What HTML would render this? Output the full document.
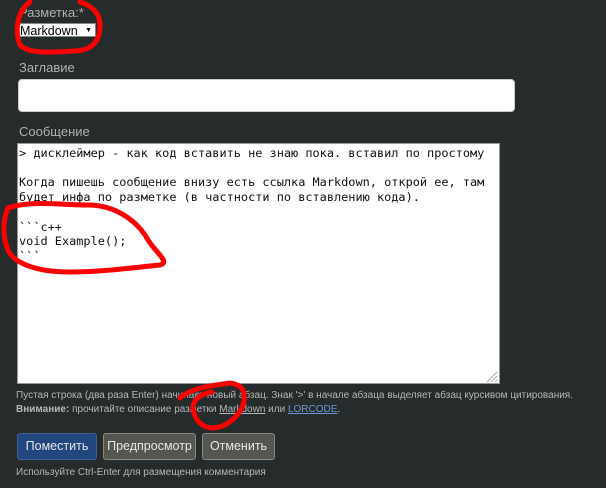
<!DOCTYPE html>
<html><head><meta charset="utf-8">
<style>
html,body{margin:0;padding:0;}
body{width:606px;height:488px;background:#262b2b;position:relative;overflow:hidden;font-family:"Liberation Sans","DejaVu Sans",sans-serif;color:#b8bcbc;}
.abs{position:absolute;}
.lbl{font-size:13px;color:#aeb2b2;}
.sel{left:17px;top:23px;width:79px;height:14px;background:#fff;border:1px solid #888;font-size:12.5px;color:#000;line-height:14px;padding-left:2px;box-sizing:border-box;}
.inp{left:18px;top:79px;width:497px;height:33px;background:#fff;border-radius:4px;box-sizing:border-box;border:1px solid #ccc;}
.ta{left:17px;top:143px;width:483px;height:241px;background:#fff;border:1px solid #999;box-sizing:border-box;}
.code{left:19px;top:146px;font-family:"DejaVu Sans Mono","Liberation Mono",monospace;font-size:11.9px;line-height:14.7px;color:#111;white-space:pre;}
.help{font-size:10px;color:#b4b8b8;}
a{color:#6d97d4;}
.btn{top:433px;height:27px;border-radius:3px;font-size:12.5px;line-height:25px;text-align:center;box-sizing:border-box;color:#e6e6e6;}
</style></head><body>
<div class="abs lbl" style="left:19px;top:5px;">Разметка:*</div>
<div class="abs sel">Markdown<span style="position:absolute;right:3px;top:0;font-size:7px;">▼</span></div>
<div class="abs lbl" style="left:19px;top:60px;">Заглавие</div>
<div class="abs inp"></div>
<div class="abs lbl" style="left:19px;top:124px;">Сообщение</div>
<div class="abs ta"></div>
<div class="abs code">&gt; дисклеймер - как код вставить не знаю пока. вставил по простому

Когда пишешь сообщение внизу есть ссылка Markdown, открой ее, там
будет инфа по разметке (в частности по вставлению кода).

&#96;&#96;&#96;c++
void Example();
&#96;&#96;&#96;</div>
<svg class="abs" style="left:484px;top:369px" width="14" height="14"><path d="M3 13L13 3M7 13L13 7M11 13L13 11" stroke="#aaa" stroke-width="1"/></svg>
<div class="abs help" style="left:16px;top:390px;">Пустая строка (два раза Enter) начинает новый абзац. Знак '&gt;' в начале абзаца выделяет абзац курсивом цитирования.</div>
<div class="abs help" style="left:16px;top:404px;"><b>Внимание:</b> прочитайте описание разметки <a style="color:#b4b8b8;text-decoration:underline">Markdown</a> или <a style="text-decoration:underline">LORCODE</a>.</div>
<div class="abs btn" style="left:17px;width:80px;background:#22477f;border:1px solid #3b5f95;">Поместить</div>
<div class="abs btn" style="left:103px;width:93px;background:#55564f;border:1px solid #8a8a84;">Предпросмотр</div>
<div class="abs btn" style="left:202px;width:73px;background:#55564f;border:1px solid #8a8a84;">Отменить</div>
<div class="abs help" style="left:16px;top:467px;">Используйте Ctrl-Enter для размещения комментария</div>
<svg class="abs" style="left:0;top:0" width="606" height="488" fill="none" stroke="#f00" stroke-width="5" stroke-linecap="round">
<path d="M30 2C18 10 14 30 20 45C30 55 55 52 75 51C95 50 100 38 100 25C100 12 90 5 80 2"/>
<path d="M8 208C30 200 60 205 90 205C120 206 140 225 148 240C158 255 170 262 160 265C130 268 100 272 70 272C40 272 15 265 8 250C2 235 3 220 8 208Z"/>
<path d="M180 398C190 388 215 385 230 383C245 385 246 395 243 405C238 418 225 428 212 428C200 427 194 418 193 408C193 400 200 394 212 392"/>
</svg>
</body></html>
